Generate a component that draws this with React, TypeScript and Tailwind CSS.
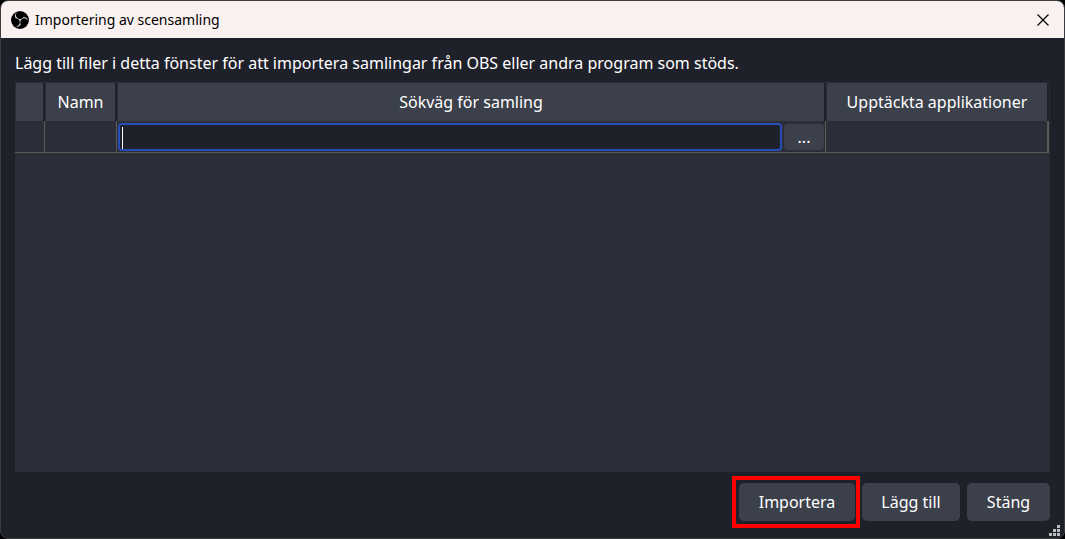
import React from "react";
import { SiObsstudio } from "react-icons/si";

const th = "h-[38px] border-r-2 border-l border-r-[#1f212a] border-l-[#2b2d38] bg-[#3c404b] p-0 text-center font-normal";
const td = "h-8 border-r border-b border-[#5a5a55] p-0";
const button = "h-[38px] rounded-[5px] bg-[#3c404b] text-center hover:bg-[#4b505c]";

function ObsLogo() {
  return (
    <span className="flex size-[18px] shrink-0 items-center justify-center overflow-hidden rounded-full bg-black text-[#e4dddc]">
      <SiObsstudio className="size-5 shrink-0" aria-hidden="true" />
    </span>
  );
}

function SizeGrip() {
  return (
    <svg viewBox="0 0 11 11" className="absolute right-1 bottom-[2px] size-[11px]" fill="#bdbdbd" aria-hidden="true">
      <path d="M8 0h3v3H8zM8 4h3v3H8zM8 8h3v3H8zM4 4h3v3H4zM4 8h3v3H4zM0 8h3v3H0z" />
    </svg>
  );
}

export default function App() {
  return (
    <div className="h-screen bg-black font-['Noto_Sans','Open_Sans',sans-serif] text-base text-white">
      <div className="relative flex h-full flex-col overflow-hidden rounded-lg border border-[#3b3c40] bg-[#1f212a]">
        <header className="flex h-[37px] shrink-0 items-center gap-[6px] bg-[#f9f1f0] pl-[10px] text-black">
          <ObsLogo />
          <h1 className="flex-1 text-sm">Importering av scensamling</h1>
          <button type="button" aria-label="Stäng fönstret" className="flex h-full w-[42px] items-center justify-center">
            <svg viewBox="0 0 12 12" className="size-3" stroke="#000" strokeWidth="1.2" aria-hidden="true">
              <path d="M0.5 0.5 11.5 11.5M11.5 0.5 0.5 11.5" />
            </svg>
          </button>
        </header>

        <main className="flex min-h-0 flex-1 flex-col px-[14px] pt-[13px] pb-[10px]">
          <p className="leading-6">
            Lägg till filer i detta fönster för att importera samlingar från OBS eller andra program som stöds.
          </p>
          <div className="mt-[7px] min-h-0 flex-1 bg-[#2b2d38] pt-px pr-px">
            <table className="w-full table-fixed border-separate border-spacing-0">
              <colgroup>
                <col className="w-[30px]" />
                <col className="w-[72px]" />
                <col />
                <col className="w-[223px]" />
              </colgroup>
              <thead>
                <tr>
                  <th className={th} aria-label="Vald" />
                  <th className={th}>Namn</th>
                  <th className={th}>Sökväg för samling</th>
                  <th className={th}>Upptäckta applikationer</th>
                </tr>
              </thead>
              <tbody>
                <tr>
                  <td className={td} />
                  <td className={td} />
                  <td className={td}>
                    <div className="relative flex items-center gap-[2px] px-px">
                      <input
                        type="text"
                        autoFocus
                        aria-label="Sökväg för samling"
                        className="h-7 min-w-0 flex-1 rounded-[4px] border-2 border-[#284cb8] bg-[#1f212a] px-[2px] caret-transparent outline-none"
                      />
                      <span className="pointer-events-none absolute top-1 left-[5px] h-[22px] w-px bg-white" />
                      <button type="button" className="h-[26px] w-10 rounded-[4px] bg-[#3c404b] leading-6">
                        ...
                      </button>
                    </div>
                  </td>
                  <td className="h-8 border-r-2 border-b border-[#5a5a55] p-0" />
                </tr>
              </tbody>
            </table>
          </div>

          <footer className="mt-1 flex items-center justify-end">
            <div className="mr-[2px] flex border-4 border-[#ff0000] py-[3px] pr-px pl-[3px]">
              <button type="button" className={`${button} w-[116px]`}>Importera</button>
            </div>
            <button type="button" className={`${button} mr-[7px] w-[98px]`}>Lägg till</button>
            <button type="button" className={`${button} w-[83px]`}>Stäng</button>
          </footer>
        </main>
        <SizeGrip />
      </div>
    </div>
  );
}
